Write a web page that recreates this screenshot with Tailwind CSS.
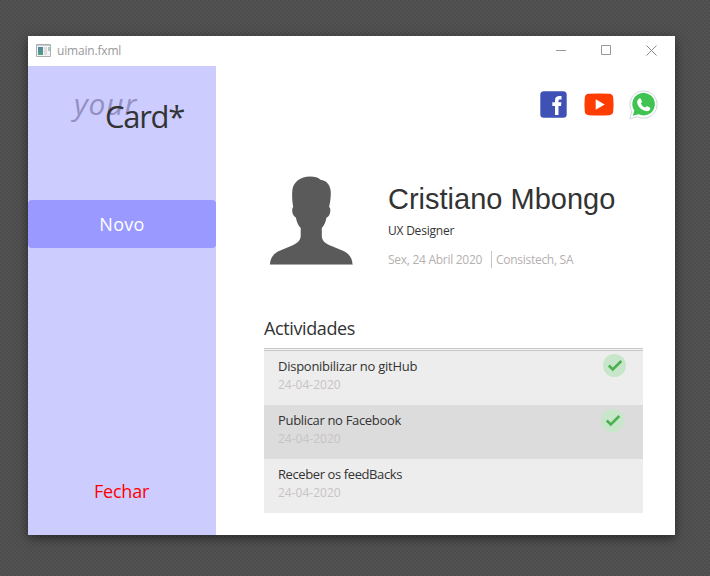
<!DOCTYPE html>
<html lang="pt">
<head>
<meta charset="utf-8">
<title>uimain.fxml</title>
<script src="https://cdn.jsdelivr.net/npm/@tailwindcss/browser@4"></script>
</head>
<body class="w-[710px] h-[576px] overflow-hidden pl-[28px] pt-[36px] bg-[#4c4c4c] bg-[conic-gradient(#535353_25%,transparent_0_50%,#535353_0_75%,transparent_0)] bg-[size:4px_4px] font-['Open_Sans',sans-serif] text-[#333333]">
<div class="w-[647px] h-[499px] bg-white flex flex-col shadow-[0_3px_10px_rgba(0,0,0,0.5)]">
  <header class="h-[30px] flex items-center pl-[8px] shrink-0">
    <svg class="w-[16px] h-[14px] mb-[1px]" viewBox="0 0 16 14"><defs><linearGradient id="g" x1="0" y1="0" x2="0" y2="1"><stop offset="0" stop-color="#4f83a4"/><stop offset="1" stop-color="#55a27d"/></linearGradient></defs><path d="M.5.5h14v12H.5z" fill="#f4f4f4" stroke="#a9afb2"/><path d="M1 1h13v1H1z" fill="#c9ced0"/><path d="M2 3h5v8H2z" fill="url(#g)"/><path d="M8 3h3v8H8z" fill="#dedede"/><path d="M12 3h2v4h-2z" fill="#a6cfc4"/></svg>
    <span class="ml-[5px] text-[12px] leading-[16px] text-[#999999] whitespace-nowrap tracking-[-0.18px]">uimain.fxml</span>
    <div class="ml-auto flex items-center gap-[34px] pr-[18px] mb-[2px]">
      <svg class="w-[11px] h-[11px]" viewBox="0 0 11 11"><path d="M0 5.500h10" stroke="#999"/></svg>
      <svg class="w-[11px] h-[11px]" viewBox="0 0 11 11"><path d="M.5.5h9v9h-9z" fill="none" stroke="#999"/></svg>
      <svg class="w-[11px] h-[11px]" viewBox="0 0 11 11"><path d="M.5.5l10 10M10.500.5l-10 10" stroke="#888"/></svg>
    </div>
  </header>
  <div class="flex flex-1">
    <aside class="w-[188px] bg-[#ccccff] flex flex-col items-stretch">
      <div class="h-[134px] relative whitespace-nowrap">
        <span class="absolute left-[46px] top-[18px] text-[30px] leading-[40px] italic text-[#9490c4] tracking-[0.8px]">your</span>
        <span class="absolute left-[77px] top-[30px] text-[31px] leading-[40px] tracking-[-1.3px]">Card*</span>
      </div>
      <button class="h-[48px] rounded-[4px] bg-[#9999ff] text-white text-[18px] text-center tracking-[0.3px]">Novo</button>
      <button class="mt-auto mb-[31px] h-[26px] pr-[1px] text-[#ff0000] text-[18px] leading-[26px] text-center tracking-[-0.2px]">Fechar</button>
    </aside>
    <main class="flex-1 pl-[48px] pr-[32px] flex flex-col">
      <nav class="mt-[24px] h-[29px] flex items-center justify-end -mr-[16px]">
        <svg class="w-[27px] h-[27px]" viewBox="0 0 27 27"><rect x=".3" y=".3" width="26.400" height="26.400" rx="3.500" fill="#3f51b5"/><path d="M15 24v-9h-2.700v-3.700h2.700V9.300c0-3 1.800-4.300 4.600-4.300h1.900v3.600h-1.500c-1.200 0-1.500.5-1.500 1.400v1.300h2.900l-.4 3.700h-2.500v9z" fill="#fff"/></svg>
        <svg class="w-[30px] h-[23px] ml-[17px]" viewBox="0 0 30 23"><path d="M5 .8Q15 .1 25 .8c3 .2 4 1.500 4.200 4 .5 4.500.5 9 0 13.500-.3 2.500-1.200 3.700-4.200 3.900q-10 .7-20 0c-3-.2-4-1.400-4.200-3.900-.5-4.500-.5-9 0-13.500C1 2.300 2 1 5 .8z" fill="#ff3d00"/><path d="M11.700 6.300v10.400l9-5.200z" fill="#fff"/></svg>
        <svg class="w-[30px] h-[30px] ml-[15px]" viewBox="0 0 30 30"><path d="M.8 28.800l2-7.300A13.600 13.600 0 1 1 8.600 26.800z" fill="#fff" stroke="#cfd8dc" stroke-width="1"/><path d="M3.900 25.700l1.400-5.100A11.300 11.300 0 1 1 9.600 24.300z" fill="#40c351"/><path d="M10.200 8.600c.5-.5 1.300-.4 1.600.2l1.100 2.600c.2.500-.1 1-1.100 2 .9 1.800 2.400 3.300 4.500 4.200.9-1.100 1.300-1.500 1.900-1.300l2.600 1.300c.6.300.6.900.3 1.700-.6 1.600-2.400 2.200-4.300 1.800-4.600-1-8-4.600-8.600-8.300-.2-1.700.6-3.100 2-4.200z" fill="#fff"/></svg>
      </nav>
      <section class="mt-[53px] h-[100px] flex">
        <svg class="w-[94px] h-[100px] shrink-0" viewBox="264 172 94 100"><path d="M270 264.500c0-6 3-10.500 9-13.500l12-5c5-2 9.500-5 9.700-9.500v-8.500c-2.500-2.500-4-6-4.800-10.500-1.500-.5-3-2.500-3.500-5-.4-2.500-.2-4.500.8-5.700-1-5-1.400-12-.8-17 1-7.500 8-13.300 17.600-13.300 5 0 8.300 1 10.500 3.300 6 .5 10.300 5.500 10.300 13 0 5-.7 10-1.700 14.200 1.300 1 1.500 3 1 5.500-.5 2.700-2 4.700-3.600 5-.8 4.500-2.300 8-4.700 10.500v8.500c.2 4.500 4.200 7.500 9.700 9.500l12 5c6 3 9 7.500 9 13.500z" fill="#5a5a5a"/><path d="M270 264.500h82.500" stroke="#aaa"/></svg>
        <div class="pl-[30px] whitespace-nowrap">
          <h1 class="mt-[10px] h-[34px] leading-[34px] text-[29px] font-['Liberation_Sans',sans-serif]">Cristiano Mbongo</h1>
          <p class="mt-[5px] h-[20px] leading-[20px] text-[12px] tracking-[-0.22px]">UX Designer</p>
          <div class="mt-[10px] flex items-center leading-[17px] text-[12px] text-[#b4b0b0] tracking-[-0.28px]">
            <span class="w-[103px]">Sex, 24 Abril 2020</span>
            <span class="border-l border-[#c4c4c4] pl-[4px]">Consistech, SA</span>
          </div>
        </div>
      </section>
      <h2 class="mt-[43px] h-[26px] leading-[26px] text-[18px] tracking-[-0.38px]">Actividades</h2>
      <div class="mt-[7px] h-[3px] border-y border-[#c8c8c8] bg-[#f4f4f4]"></div>
      <ul class="whitespace-nowrap">
        <li class="h-[54px] bg-[#ededed] pl-[14px] pr-[17px] flex justify-between">
          <div class="pt-[6px]"><p class="h-[19px] leading-[18px] text-[13px] tracking-[-0.26px]">Disponibilizar no gitHub</p><p class="h-[18px] leading-[18px] text-[12px] text-[#c8c4c4]">24-04-2020</p></div>
          <svg class="mt-[3px] w-[23px] h-[23px]" viewBox="0 0 23 23"><circle cx="11.500" cy="11.500" r="11.500" fill="#c8e6c9"/><path d="M5.800 11.500l4 4 8.500-8.500" fill="none" stroke="#4caf50" stroke-width="2.500"/></svg>
        </li>
        <li class="h-[54px] bg-[#dcdcdc] pl-[14px] pr-[19px] flex justify-between">
          <div class="pt-[6px]"><p class="h-[19px] leading-[18px] text-[13px] tracking-[-0.33px]">Publicar no Facebook</p><p class="h-[18px] leading-[18px] text-[12px] text-[#c8c4c4]">24-04-2020</p></div>
          <svg class="mt-[4px] w-[23px] h-[23px]" viewBox="0 0 23 23"><circle cx="11.500" cy="11.500" r="11.500" fill="#c8e6c9"/><path d="M5.800 11.500l4 4 8.500-8.500" fill="none" stroke="#4caf50" stroke-width="2.500"/></svg>
        </li>
        <li class="h-[54px] bg-[#ededed] pl-[14px]">
          <div class="pt-[6px]"><p class="h-[19px] leading-[18px] text-[13px] tracking-[-0.4px]">Receber os feedBacks</p><p class="h-[18px] leading-[18px] text-[12px] text-[#c8c4c4]">24-04-2020</p></div>
        </li>
      </ul>
    </main>
  </div>
</div>
</body>
</html>
